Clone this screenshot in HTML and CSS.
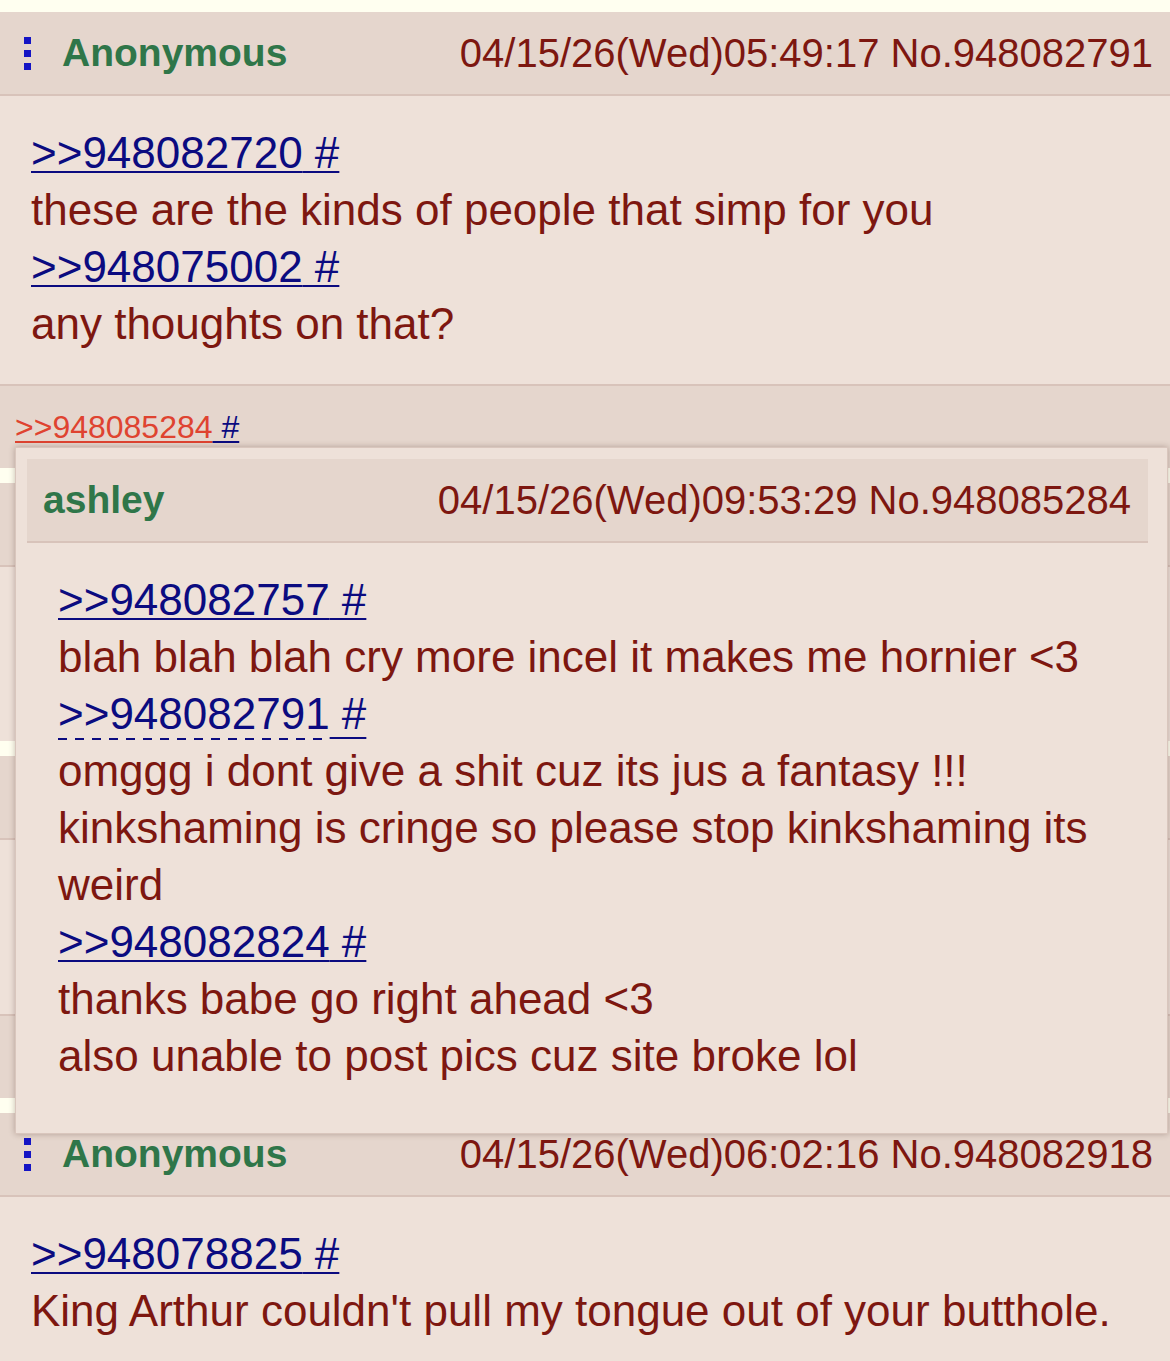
FILE: index.html
```html
<!DOCTYPE html>
<html lang="en">
<head>
    <meta charset="UTF-8">
    <meta name="viewport" content="width=device-width, initial-scale=1.0">
    <title>Thread</title>
    <link rel="stylesheet" href="styles.css">
</head>
<body>
    <div class="thread">
        <div class="post">
            <div class="post-head">
                <span class="menu"><i></i><i></i><i></i></span>
                <span class="name">Anonymous</span>
                <span class="date">04/15/26(Wed)05:49:17 No.948082791</span>
            </div>
            <div class="post-body">
                <a class="quote" href="#">&gt;&gt;948082720</a><a class="hash" href="#"> #</a><br>
                these are the kinds of people that simp for you<br>
                <a class="quote" href="#">&gt;&gt;948075002</a><a class="hash" href="#"> #</a><br>
                any thoughts on that?
            </div>
            <div class="backlinks">
                <span><a class="quote small hover" href="#">&gt;&gt;948085284</a><a class="hash small" href="#"> #</a></span>
            </div>
        </div>

        <!-- posts hidden under the preview -->
        <div class="post">
            <div class="post-head"></div>
            <div class="post-body blank"></div>
        </div>

        <div class="post">
            <div class="post-head"></div>
            <div class="post-body blank"></div>
            <div class="backlinks"></div>
        </div>

        <div class="post">
            <div class="post-head">
                <span class="menu"><i></i><i></i><i></i></span>
                <span class="name">Anonymous</span>
                <span class="date">04/15/26(Wed)06:02:16 No.948082918</span>
            </div>
            <div class="post-body">
                <a class="quote" href="#">&gt;&gt;948078825</a><a class="hash" href="#"> #</a><br>
                King Arthur couldn't pull my tongue out of your butthole.
            </div>
        </div>
    </div>

    <div class="preview">
        <div class="post-head">
            <span class="name">ashley</span>
            <span class="date">04/15/26(Wed)09:53:29 No.948085284</span>
        </div>
        <div class="post-body">
            <a class="quote" href="#">&gt;&gt;948082757</a><a class="hash" href="#"> #</a><br>
            blah blah blah cry more incel it makes me hornier &lt;3<br>
            <a class="quote forward" href="#">&gt;&gt;948082791</a><a class="hash low" href="#"> #</a><br>
            omggg i dont give a shit cuz its jus a fantasy !!!<br>
            kinkshaming is cringe so please stop kinkshaming its weird<br>
            <a class="quote" href="#">&gt;&gt;948082824</a><a class="hash" href="#"> #</a><br>
            thanks babe go right ahead &lt;3<br>
            also unable to post pics cuz site broke lol
        </div>
    </div>
</body>
</html>
```

FILE: styles.css
```css
body {
    margin: 0;
    padding-top: 12px;
    background: #fffff0;
    font-family: 'Liberation Sans', Arial, sans-serif;
    color: #7d1710;
    position: relative;
}

.thread {
    display: flex;
    flex-direction: column;
    gap: 15px;
}

.post {
    background: #eee1d9;
}

.post-head {
    display: flex;
    align-items: center;
    height: 82px;
    padding: 0 17px 0 16px;
    background: #e5d6cd;
    border-bottom: 2px solid #d8c3ba;
}

.menu {
    display: flex;
    flex-direction: column;
    gap: 6px;
    margin: 0 31px 0 8px;
}

.menu i {
    display: block;
    width: 7px;
    height: 7px;
    background: #1414c4;
}

.name {
    font-size: 39px;
    font-weight: 700;
    color: #2f7649;
}

.date {
    margin-left: auto;
    font-size: 40px;
    color: #7d1710;
}

.post-body {
    padding: 28px 31px 32px;
    font-size: 44px;
    line-height: 57px;
}

.post-body.blank {
    height: 114px;
}

.quote,
.hash {
    color: #0b0b80;
    text-decoration: underline;
    text-decoration-thickness: 2px;
    text-underline-offset: 3px;
}

.quote.forward {
    text-decoration: none;
    padding-bottom: 2px;
    background: repeating-linear-gradient(to right, #0b0b80 0 9px, transparent 9px 17px) left bottom / 100% 2px no-repeat;
}

.hash.low {
    text-underline-offset: 8px;
}

.backlinks {
    height: 82px;
    display: flex;
    align-items: center;
    padding: 0 15px;
    background: #e5d6cd;
    border-top: 2px solid #d8c3ba;
}

.small {
    font-size: 32px;
    text-decoration-thickness: 2px;
}

.quote.hover {
    color: #df4330;
}

.preview {
    position: absolute;
    top: 447px;
    left: 15px;
    width: 1153px;
    box-sizing: border-box;
    padding: 11px 19px 17px 11px;
    background: #eee1d9;
    border: 1px solid #d9c6bd;
    box-shadow: 0 0 6px rgba(60, 30, 20, 0.3);
}
```
